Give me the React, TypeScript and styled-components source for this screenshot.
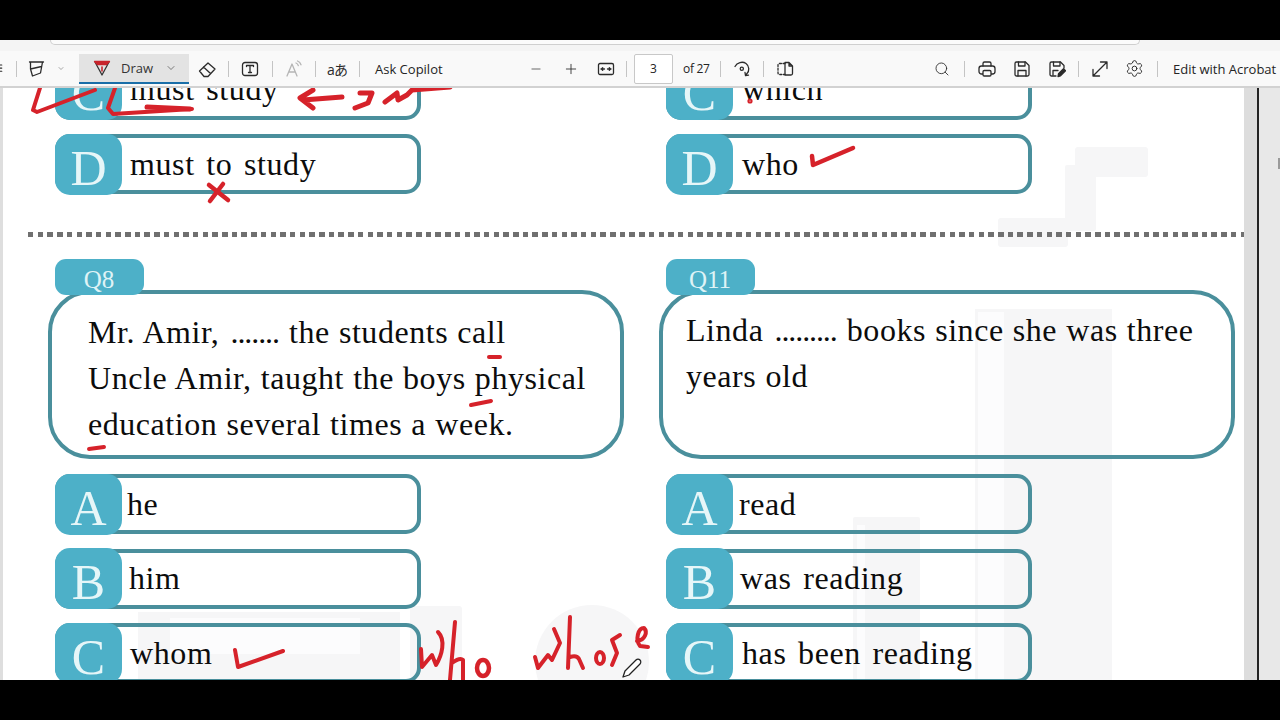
import React from 'react';
import styled, { createGlobalStyle } from 'styled-components';
import { Minus, Plus, Search, Settings, ChevronDown } from 'lucide-react';

const GlobalStyle = createGlobalStyle`
  html, body {
    margin: 0;
    padding: 0;
    background: #000;
  }
  * {
    box-sizing: border-box;
  }
`;

const Screen = styled.div`
  width: 1280px;
  height: 720px;
  display: flex;
  flex-direction: column;
  overflow: hidden;
  background: #000;
`;

const Letterbox = styled.div`
  height: ${(p: { $h: number }) => p.$h}px;
  flex: none;
  background: #000;
`;

/* browser strip + address bar edge */
const BrowserStrip = styled.div`
  height: 11px;
  flex: none;
  overflow: hidden;
  background: #f4f4f4;
  padding: 0 140px 0 50px;
`;

const AddressEdge = styled.div`
  height: 5px;
  background: #fbfbfb;
  border: 1px solid #cfcfcf;
  border-top: none;
  border-radius: 0 0 10px 10px;
`;

const Toolbar = styled.div`
  height: 37px;
  flex: none;
  display: flex;
  align-items: center;
  background: #f9f9f9;
  border-bottom: 2px solid #d2d2d2;
  font-family: 'Open Sans', 'Liberation Sans', sans-serif;
  font-size: 13px;
  color: #242424;
  white-space: nowrap;
  overflow: hidden;
`;

const Tool = styled.div<{ $w: number; $ml?: number; $faint?: boolean }>`
  width: ${(p) => p.$w}px;
  margin-left: ${(p) => p.$ml || 0}px;
  height: 30px;
  flex: none;
  display: flex;
  align-items: center;
  justify-content: center;
  color: ${(p) => (p.$faint ? '#b5b5b5' : '#2b2b2b')};
`;

const Sep = styled.div<{ $ml?: number }>`
  width: 1px;
  height: 16px;
  flex: none;
  margin-left: ${(p) => p.$ml || 0}px;
  background: #c4c4c4;
`;

const Gap = styled.div<{ $w: number }>`
  width: ${(p) => p.$w}px;
  flex: none;
`;

const DrawButton = styled.div`
  width: 110px;
  height: 30px;
  flex: none;
  margin-left: 14px;
  display: flex;
  align-items: center;
  padding-left: 14px;
  background: #e3e3e3;
  border-bottom: 2px solid #1a6ea8;
  color: #333;
`;

const DrawLabel = styled.span`
  margin-left: 10px;
  width: 44px;
  flex: none;
`;

const ToolLabel = styled.span<{ $ml: number; $w?: number }>`
  margin-left: ${(p) => p.$ml}px;
  flex: none;
  width: ${(p) => (p.$w ? `${p.$w}px` : 'auto')};
`;

const TranslateGlyphs = styled.span`
  font-family: 'Open Sans', 'Noto Sans CJK JP', sans-serif;
  font-size: 14px;
  letter-spacing: -1px;
`;

const PageInput = styled.div`
  width: 39px;
  height: 30px;
  flex: none;
  margin-left: 7px;
  display: flex;
  align-items: center;
  justify-content: center;
  background: #fff;
  border: 1px solid #c8c8c8;
  border-radius: 2px;
  font-size: 12px;
`;

const PageCount = styled.span`
  margin-left: 10px;
  width: 26px;
  flex: none;
  font-size: 12px;
  letter-spacing: -0.3px;
`;

/* viewer */
const Viewer = styled.div`
  flex: 1;
  display: flex;
  position: relative;
  overflow: hidden;
  background: #fff;
`;

const LeftGutter = styled.div`
  width: 3px;
  flex: none;
  background: #dedede;
`;

const PageSheet = styled.div`
  width: 1241px;
  flex: none;
  display: flex;
  flex-direction: column;
  position: relative;
  z-index: 1;
  background: transparent;
`;

const ScrollTrack = styled.div`
  flex: 1;
  display: flex;
  background: #e2e2e2;
  position: relative;
  z-index: 1;
`;

const ScrollEdge = styled.div`
  width: 15px;
  flex: none;
  background: #dddddd;
  border-right: 2px solid #222;
`;

const ScrollRest = styled.div`
  flex: 1;
  background: #e8e8e8;
`;

const ScrollTick = styled.div`
  position: absolute;
  right: 0;
  top: 70px;
  width: 2px;
  height: 11px;
  background: #9a9a9a;
`;

const Columns = styled.div<{ $mt: number }>`
  display: grid;
  flex: none;
  grid-template-columns: 611px 1fr;
  margin: ${(p) => p.$mt}px 0 0 52px;
`;

const Column = styled.div`
  display: flex;
  flex-direction: column;
`;

const OptionList = styled.div<{ $mt?: number }>`
  display: flex;
  flex-direction: column;
  gap: 14.5px;
  margin-top: ${(p) => p.$mt || 0}px;
`;

const OptionRow = styled.div`
  width: 366px;
  height: 60px;
  flex: none;
  display: flex;
  align-items: center;
  border: 4px solid #4a8f9c;
  border-radius: 15px;
`;

const Badge = styled.div`
  width: 67px;
  height: 61px;
  flex: none;
  margin: -4px 0 -4px -4px;
  padding-top: 7px;
  display: flex;
  align-items: center;
  justify-content: center;
  background: #4db0c8;
  border-radius: 15px;
  font-family: 'Liberation Serif', serif;
  font-size: 50px;
  line-height: 1;
  color: #e6f6f8;
`;

const OptionText = styled.div<{ $indent: number }>`
  margin-left: ${(p) => p.$indent}px;
  font-family: 'Liberation Serif', serif;
  font-size: 32px;
  letter-spacing: 0.6px;
  word-spacing: 3px;
  color: #0c0c0c;
  white-space: nowrap;
`;

const Divider = styled.div`
  height: 5px;
  flex: none;
  margin: 38px 0 0 25px;
  background: repeating-linear-gradient(90deg, #707070 0 5.5px, transparent 5.5px 9.7px);
`;

const QTab = styled.div`
  width: 89px;
  height: 36px;
  flex: none;
  position: relative;
  z-index: 1;
  padding: 8px 1px 0 0;
  text-align: center;
  background: #4db0c8;
  border-radius: 11px;
  font-family: 'Liberation Serif', serif;
  font-size: 25px;
  line-height: 26px;
  color: #dff3f6;
`;

const QBox = styled.div<{ $padLeft: number; $padTop: number }>`
  width: 576px;
  height: 169px;
  flex: none;
  margin: -5px 0 0 -7px;
  padding: ${(p) => p.$padTop}px 0 0 ${(p) => p.$padLeft}px;
  border: 4px solid #4a8f9c;
  border-radius: 42px;
  font-family: 'Liberation Serif', serif;
  font-size: 32px;
  line-height: 46px;
  letter-spacing: 0.55px;
  word-spacing: 0.6px;
  color: #0c0c0c;
  white-space: nowrap;
`;

const Blank = styled.span`
  letter-spacing: -1.1px;
  margin: 0 1px 0 2px;
`;

const Backdrop = styled.svg`
  position: absolute;
  left: 0;
  top: 0;
  width: 1280px;
  height: 592px;
`;

const Ink = styled.svg`
  position: absolute;
  left: 0;
  top: 0;
  width: 1280px;
  height: 592px;
  z-index: 2;
  fill: none;
  stroke: #d6222a;
  stroke-linecap: round;
  stroke-linejoin: round;
`;

const IconSvg = styled.svg`
  fill: none;
  stroke: currentColor;
  stroke-width: 1.3;
  stroke-linecap: round;
  stroke-linejoin: round;
`;

const Icon: React.FC<{ size?: number; children: React.ReactNode }> = ({ size = 18, children }) => (
  <IconSvg width={size} height={size} viewBox="0 0 18 18">
    {children}
  </IconSvg>
);

const Hamburger = () => (
  <Icon size={16}>
    <path d="M-5 4.5h7M-5 8h7M-5 11.5h7" />
  </Icon>
);

const Highlighter = () => (
  <Icon>
    <path d="M1.5 2h14M2.5 2v7l2 7 8-3 2-11M2.5 9l11-2.5" />
  </Icon>
);

const DrawPen = () => (
  <Icon>
    <path d="M2 3l7 13 7-13" stroke="#333" />
    <path d="M1.5 2.5h15l-3 3h-9z" fill="#c8242c" stroke="#c8242c" />
    <path d="M9 8v4" stroke="#c8242c" strokeWidth="1.6" />
  </Icon>
);

const Eraser = () => (
  <Icon>
    <path d="M1.5 11L10 3l7 6-7 7.5H6zM5.5 7l7 6.5" />
  </Icon>
);

const TextBox = () => (
  <Icon>
    <rect x="1.5" y="2.5" width="15" height="13" rx="2.5" />
    <path d="M5.5 6.5V5.5h7v1M9 5.5v7M7.5 12.5h3" />
  </Icon>
);

const ReadAloud = () => (
  <Icon>
    <path d="M2 16L7 4l5 12M3.8 12h6.4M11 3c1.2.5 2 1.4 2.3 2.6M12.5 1c1.8.7 3 2.2 3.5 3.8" />
  </Icon>
);

const FitWidth = () => (
  <Icon>
    <rect x="1.5" y="3.5" width="15" height="11" rx="1.5" />
    <path d="M4 9h3.5M4.5 9l1.2-1.3M4.5 9l1.2 1.3M14 9h-3.5M13.5 9l-1.2-1.3M13.5 9l-1.2 1.3" />
  </Icon>
);

const Rotate = () => (
  <Icon>
    <path d="M2 6.5C4 2.5 9.5 1 13 3.5c3.5 2.5 3.5 7.5 1 10l-1.5 2M12 12.5l.5 3.2 3-.6" />
    <circle cx="8.8" cy="8.8" r="1.6" />
  </Icon>
);

const TwoPage = () => (
  <Icon>
    <path d="M9 3.5H3.5a1.5 1.5 0 0 0-1.5 1.5v8a1.5 1.5 0 0 0 1.5 1.5H9" strokeDasharray="2 1.6" />
    <path d="M9 2.5h4l3.5 3.5v7.5a1.5 1.5 0 0 1-1.5 1.5H9zM13 2.5V6h3.5" />
  </Icon>
);

const PrintIcon = () => (
  <Icon>
    <path d="M5 6V3.5A1.5 1.5 0 0 1 6.5 2h5A1.5 1.5 0 0 1 13 3.5V6" />
    <rect x="1" y="6" width="16" height="8" rx="2.5" />
    <rect x="5" y="10.5" width="8" height="5.5" rx="1.2" fill="#f9f9f9" />
  </Icon>
);

const SaveIcon = () => (
  <Icon>
    <path d="M2 3.5A1.5 1.5 0 0 1 3.5 2h9L16 5.5v9a1.5 1.5 0 0 1-1.5 1.5h-11A1.5 1.5 0 0 1 2 14.5z" />
    <path d="M5.5 2v4h6.5V2M5 16v-5.5h8V16" />
  </Icon>
);

const SaveAsIcon = () => (
  <Icon>
    <path d="M8 16H3.5A1.5 1.5 0 0 1 2 14.5v-11A1.5 1.5 0 0 1 3.5 2h9L16 5.5V8" />
    <path d="M5.5 2v4h6.5V2M5 15v-4.5h5" />
    <path d="M10 16.5l.5-2.7 5-5 2 2-5 5z" fill="currentColor" />
  </Icon>
);

const Expand = () => (
  <Icon>
    <path d="M2 16L16 2M9.5 2H16v6.5M2 9.5V16h6.5" />
  </Icon>
);

const Handwriting = () => (
  <Ink viewBox="0 88 1280 592">
    {/* C row marks */}
    <path d="M40 88l-7 22 4 2 58-22" strokeWidth="4" />
    <path d="M115 88l-7 20 5 6 79-5" strokeWidth="4" />
    <path d="M147 107l43 2" strokeWidth="5" />
    <path d="M342 97l-39 3M313 90l-13 8 13 10" strokeWidth="5" />
    <path d="M360 93h12l-4 10-13 5" strokeWidth="5" />
    <path d="M385 102l12-9 1 7 9-5 5-5 38-3" strokeWidth="5" />
    <circle cx="750" cy="101" r="1.6" strokeWidth="2" />
    {/* D row marks */}
    <path d="M209 185l19 15M223 184l-13 17" strokeWidth="4.5" />
    <path d="M812 156l1 9 40-17" strokeWidth="4.5" />
    {/* Q8 marks */}
    <path d="M489 357h11" strokeWidth="4" />
    <path d="M471 405l20-4" strokeWidth="4" />
    <path d="M89 449l15-2" strokeWidth="4" />
    {/* answer check and note */}
    <path d="M235 650l3 17 45-16" strokeWidth="4" />
    <path d="M421 649l1 18 10-12 4 10c6-10 10-25 2-33" strokeWidth="4" />
    <path d="M455 622l-5 58M452 663q8-6 11-3v20" strokeWidth="4" />
    <ellipse cx="483" cy="668" rx="6" ry="8" strokeWidth="4.5" />
    <path d="M535 657l3 11 10-13 4 5 8-17-6-14" strokeWidth="4" />
    <path d="M570 617l-2 51M570 657q7-2 9 2l4 9" strokeWidth="4" />
    <ellipse cx="600" cy="658" rx="4" ry="6" strokeWidth="4" />
    <path d="M620 635l-8 5 5 13-5 12" strokeWidth="4" />
    <path d="M637 641c8-1 11-9 7-13-6 0-9 12-4 18l8 1" strokeWidth="4" />
    {/* pencil cursor */}
    <path
      d="M623 677l2-6 11-11c1-1 3-1 4 0s1 3 0 4l-11 11z"
      fill="#fff"
      stroke="#222"
      strokeWidth="1.3"
    />
  </Ink>
);

const Watermark = () => (
  <Backdrop viewBox="0 88 1280 592">
    <g fill="#f6f6f7">
      <rect x="1075" y="147" width="73" height="30" rx="3" />
      <rect x="1065" y="165" width="31" height="66" rx="2" />
      <rect x="998" y="218" width="70" height="29" rx="3" />
      <rect x="975" y="309" width="137" height="371" />
      <rect x="853" y="517" width="67" height="163" rx="2" />
      <rect x="138" y="612" width="262" height="68" />
      <rect x="410" y="606" width="52" height="74" rx="3" />
      <circle cx="592" cy="662" r="57" />
    </g>
    <g fill="#fcfcfd">
      <rect x="978" y="312" width="26" height="368" />
      <rect x="857" y="525" width="8" height="155" />
      <rect x="170" y="618" width="190" height="36" />
    </g>
  </Backdrop>
);

type OptionData = { letter: string; text: string; indent: number };

const Option: React.FC<OptionData> = ({ letter, text, indent }) => (
  <OptionRow>
    <Badge>{letter}</Badge>
    <OptionText $indent={indent}>{text}</OptionText>
  </OptionRow>
);

const Options: React.FC<{ items: OptionData[]; mt?: number }> = ({ items, mt }) => (
  <OptionList $mt={mt}>
    {items.map((o) => (
      <Option key={o.letter} {...o} />
    ))}
  </OptionList>
);

const q7 = {
  left: [
    { letter: 'C', text: 'must study', indent: 8 },
    { letter: 'D', text: 'must to study', indent: 8 },
  ],
  right: [
    { letter: 'C', text: 'which', indent: 9 },
    { letter: 'D', text: 'who', indent: 9 },
  ],
};

const q8 = [
  { letter: 'A', text: 'he', indent: 5 },
  { letter: 'B', text: 'him', indent: 7 },
  { letter: 'C', text: 'whom', indent: 8 },
];

const q11 = [
  { letter: 'A', text: 'read', indent: 6 },
  { letter: 'B', text: 'was reading', indent: 7 },
  { letter: 'C', text: 'has been reading', indent: 9 },
];

const App = () => (
  <Screen>
    <GlobalStyle />
    <Letterbox $h={40} />
    <BrowserStrip>
      <AddressEdge />
    </BrowserStrip>
    <Toolbar>
      <Tool $w={16}>
        <Hamburger />
      </Tool>
      <Sep />
      <Tool $w={40}>
        <Highlighter />
      </Tool>
      <Tool $w={8}>
        <ChevronDown size={11} strokeWidth={1.2} />
      </Tool>
      <DrawButton>
        <DrawPen />
        <DrawLabel>Draw</DrawLabel>
        <ChevronDown size={12} strokeWidth={1.2} />
      </DrawButton>
      <Tool $w={36}>
        <Eraser />
      </Tool>
      <Sep $ml={3} />
      <Tool $w={42}>
        <TextBox />
      </Tool>
      <Sep $ml={1} />
      <Tool $w={42} $faint>
        <ReadAloud />
      </Tool>
      <Sep />
      <Tool $w={42}>
        <TranslateGlyphs>aあ</TranslateGlyphs>
      </Tool>
      <Sep $ml={1} />
      <ToolLabel $ml={15} $w={70}>
        Ask Copilot
      </ToolLabel>
      <Gap $w={74} />
      <Tool $w={34}>
        <Minus size={14} strokeWidth={1.2} />
      </Tool>
      <Tool $w={35}>
        <Plus size={16} strokeWidth={1.3} />
      </Tool>
      <Tool $w={35}>
        <FitWidth />
      </Tool>
      <Sep $ml={3} />
      <PageInput>3</PageInput>
      <PageCount>of 27</PageCount>
      <Sep $ml={11} />
      <Tool $w={42}>
        <Rotate />
      </Tool>
      <Sep />
      <Tool $w={42}>
        <TwoPage />
      </Tool>
      <Gap $w={119} />
      <Tool $w={34}>
        <Search size={16} strokeWidth={1.3} />
      </Tool>
      <Sep $ml={5} />
      <Tool $w={34} $ml={5}>
        <PrintIcon />
      </Tool>
      <Tool $w={35}>
        <SaveIcon />
      </Tool>
      <Tool $w={35}>
        <SaveAsIcon />
      </Tool>
      <Sep $ml={4} />
      <Tool $w={34} $ml={4}>
        <Expand />
      </Tool>
      <Tool $w={35}>
        <Settings size={19} strokeWidth={1.2} />
      </Tool>
      <Sep $ml={5} />
      <ToolLabel $ml={15}>Edit with Acrobat</ToolLabel>
    </Toolbar>
    <Viewer>
      <Watermark />
      <LeftGutter />
      <PageSheet>
        <Columns $mt={-28.5}>
          <Options items={q7.left} />
          <Options items={q7.right} />
        </Columns>
        <Divider />
        <Columns $mt={22}>
          <Column>
            <QTab>Q8</QTab>
            <QBox $padLeft={36} $padTop={15}>
              Mr. Amir, <Blank>.......</Blank> the students call
              <br />
              Uncle Amir, taught the boys physical
              <br />
              education several times a week.
            </QBox>
            <Options items={q8} mt={15} />
          </Column>
          <Column>
            <QTab>Q11</QTab>
            <QBox $padLeft={23} $padTop={13}>
              Linda <Blank>.........</Blank> books since she was three
              <br />
              years old
            </QBox>
            <Options items={q11} mt={15} />
          </Column>
        </Columns>
      </PageSheet>
      <ScrollTrack>
        <ScrollEdge />
        <ScrollRest />
        <ScrollTick />
      </ScrollTrack>
      <Handwriting />
    </Viewer>
    <Letterbox $h={40} />
  </Screen>
);

export default App;
